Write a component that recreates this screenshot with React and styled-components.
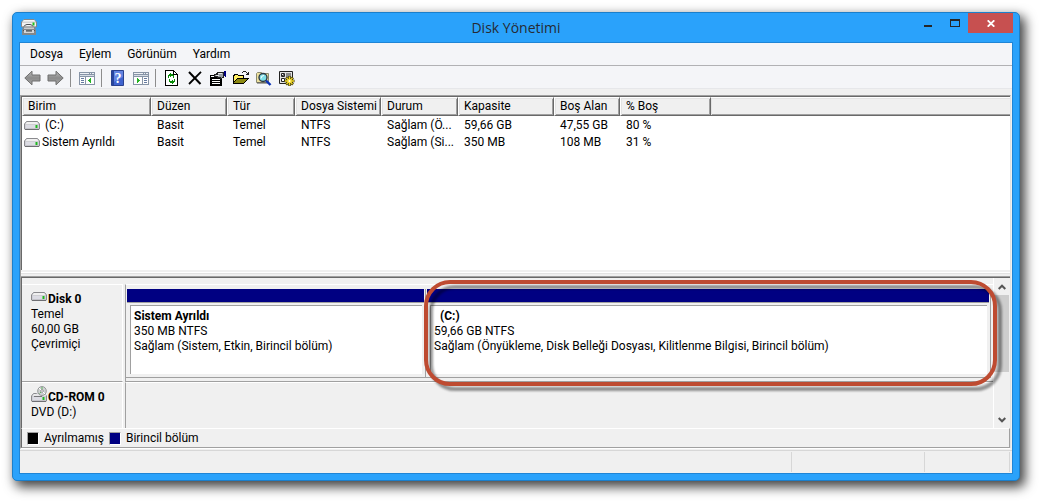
import React from 'react';
import styled, { createGlobalStyle, css } from 'styled-components';

const GlobalStyle = createGlobalStyle`
  * {
    box-sizing: border-box;
  }

  body {
    margin: 0;
    background: #fff;
    color: #000;
    font-family: Roboto, 'Noto Sans', sans-serif;
    font-size: 12px;
    line-height: 15px;
  }

  button {
    font: inherit;
    color: inherit;
    border: none;
    padding: 0;
    background: transparent;
  }

  svg {
    display: block;
    flex: none;
  }
`;

const Page = styled.main`
  display: flex;
  min-height: 100vh;
  padding: 12px 20px 20px 12px;
`;

const Window = styled.section`
  flex: 1;
  min-width: 0;
  display: flex;
  flex-direction: column;
  padding: 0 6px 6px;
  border: 1px solid #1b7fcb;
  border-radius: 5px;
  background: #2aa2fb;
  box-shadow: 4px 5px 12px 1px rgba(0, 0, 0, 0.75);
`;

const TitleBar = styled.header`
  display: grid;
  grid-template-columns: 1fr auto 1fr;
  height: 29px;
`;

const TitleIcon = styled.div`
  padding: 6px 2px;
`;

const Title = styled.h1`
  margin: 0;
  font-family: 'Open Sans', 'Noto Sans', sans-serif;
  font-size: 14px;
  font-weight: 400;
  line-height: 30px;
  color: #262b33;
`;

const Caption = styled.div`
  display: flex;
  justify-content: flex-end;
  height: 20px;
`;

const CaptionButton = styled.button`
  display: flex;
  align-items: center;
  justify-content: center;
  width: ${({ $close }) => ($close ? '45px' : '27px')};
  background: ${({ $close }) => ($close ? '#c75050' : 'transparent')};
`;

const Client = styled.div`
  flex: 1;
  display: flex;
  flex-direction: column;
  border: 1px solid #1f85d6;
  background: #f0f0f0;
`;

const MenuBar = styled.nav`
  display: flex;
  height: 23px;
  padding: 0 2px;
  background: #f4f5f8;
  border-bottom: 1px solid #b1b1b4;
`;

const MenuItem = styled.button`
  padding: 0 8px;
`;

const ToolBar = styled.div`
  display: flex;
  align-items: center;
  height: 23px;
  padding: 2px 0 0 1px;
  background: #f4f5f8;
  border-bottom: 1px solid #e6e7ea;
`;

const ToolButton = styled.button`
  display: flex;
  align-items: center;
  justify-content: center;
  width: 23px;
  height: 20px;
`;

const ToolSeparator = styled.span`
  width: 1px;
  height: 18px;
  margin: 0 4px 0 3px;
  background: #8d8d8d;
`;

const Panes = styled.div`
  flex: 1;
  display: flex;
  flex-direction: column;
  margin: 6px 1px 1px 0;
  border: 1px solid #a0a0a0;
  border-right-color: #e3e3e3;
  border-bottom-color: #fff;
`;

const VolumePane = styled.div`
  flex: 1;
  border-top: 1px solid #696969;
  border-left: 1px solid #696969;
  background: #fff;
`;

const VolumeTable = styled.table`
  width: 100%;
  table-layout: fixed;
  border-collapse: separate;
  border-spacing: 0;

  th {
    height: 19px;
    padding: 0 5px;
    text-align: left;
    font-weight: 400;
    line-height: 15px;
    white-space: nowrap;
    background: #f0f0f0;
    border-top: 1px solid #fff;
    border-left: 1px solid #fff;
    border-right: 1px solid #696969;
    border-bottom: 1px solid #696969;
    box-shadow: inset 1px 1px #e3e3e3, inset -1px -1px #a0a0a0;
  }

  td {
    height: 17px;
    padding: 0 0 0 6px;
    white-space: nowrap;
  }

  tbody::before {
    content: '';
    display: block;
    height: 1px;
  }
`;

const Column = styled.col`
  width: ${({ $width }) => $width};
`;

const FillerHeader = styled.td`
  && {
    height: 19px;
    background: #f0f0f0;
    border-top: 1px solid #fff;
    border-bottom: 1px solid #696969;
    box-shadow: inset 1px 1px #e3e3e3, inset 0 -1px #a0a0a0;
  }
`;

const VolumeName = styled.div`
  display: flex;
  align-items: center;
  gap: 2px;
  margin-left: -4px;
  white-space: pre;
`;

const Splitter = styled.div`
  height: 8px;
  background: #f0f0f0;
  border-top: 2px solid #f0f0f0;
  border-bottom: 1px solid #696969;
  box-shadow: inset 0 1px #fff, inset 0 2px #e3e3e3, inset 0 -1px #a0a0a0;
`;

const DiskPane = styled.div`
  display: flex;
  border-left: 1px solid #696969;
`;

const Disks = styled.div`
  flex: 1;
  min-width: 0;
  padding-top: 6px;
  border-right: 1px solid #fff;
`;

const DiskRow = styled.div`
  display: flex;
  height: ${({ $height }) => $height};
`;

const DiskInfo = styled.div`
  width: 101px;
  padding: 7px 0 0 9px;
  border-top: 1px solid #fff;
  border-right: 1px solid #fff;
  ${({ $last }) =>
    !$last &&
    css`
      border-bottom: 1px solid #a0a0a0;
    `}
`;

const DiskName = styled.div`
  display: flex;
  align-items: ${({ $tall }) => ($tall ? 'flex-end' : 'flex-start')};
  gap: 1px;
  height: 15px;
  font-weight: 700;

  svg {
    margin-bottom: ${({ $tall }) => ($tall ? '3px' : 0)};
  }
`;

const DiskLine = styled.div`
  white-space: pre;
  font-weight: ${({ $bold }) => ($bold ? 700 : 400)};
`;

const DiskBody = styled.div`
  flex: 1;
  min-width: 0;
  display: flex;
  margin-left: 2px;
  padding-top: 4px;
  border-top: 1px solid #fff;
  border-left: 1px solid #a0a0a0;
  ${({ $last }) =>
    !$last &&
    css`
      padding-bottom: 3px;
      border-bottom: 1px solid #a0a0a0;
    `}
`;

const Partition = styled.div`
  position: relative;
  flex: ${({ $width }) => ($width ? `0 0 ${$width}` : '1')};
  min-width: 0;
  display: flex;
  flex-direction: column;
  margin-right: ${({ $width }) => ($width ? '0' : '2px')};
  padding-left: 1px;
  border-right: 1px solid #a0a0a0;
  border-bottom: 1px solid #a0a0a0;
`;

const PartitionBar = styled.div`
  height: 14px;
  margin-right: 1px;
  background: #000082;
  border-bottom: 1px solid #a0a0a0;
`;

const PartitionBox = styled.div`
  flex: 1;
  margin: 2px 3px 3px;
  padding: 3px;
  overflow: hidden;
  white-space: nowrap;
  background: #fff;
  border-top: 1px solid #a0a0a0;
  border-left: 1px solid #a0a0a0;
`;

const Highlight = styled.div`
  position: absolute;
  z-index: 1;
  inset: -9px -7px -9px -2px;
  border: 4px solid #be4b31;
  border-radius: 26px;
  filter: drop-shadow(5px 5px 1px rgba(0, 0, 0, 0.4));
  pointer-events: none;
`;

const ScrollBar = styled.div`
  display: flex;
  flex-direction: column;
  width: 16px;
  padding-right: 1px;
`;

const ScrollButton = styled.button`
  display: flex;
  align-items: center;
  justify-content: center;
  height: 17px;
`;

const ScrollTrack = styled.div`
  flex: 1;
`;

const ScrollThumb = styled.div`
  height: 77px;
  background: #cdcdcd;
`;

const Legend = styled.div`
  display: flex;
  align-items: center;
  gap: 5px;
  height: 20px;
  padding-left: 5px;
  border: 1px solid #a0a0a0;
  border-left-color: #696969;
  border-top-color: #fff;
`;

const Swatch = styled.span`
  width: 12px;
  height: 13px;
  background: ${({ $color }) => $color};
  border: 1px solid #a0a0a0;
  border-right-color: #fff;
  border-bottom-color: #fff;
`;

const StatusBar = styled.footer`
  display: flex;
  height: 23px;
  padding: 1px 2px 1px 0;
  border-top: 1px solid #d7d7d7;
`;

const StatusCell = styled.div`
  flex: ${({ $width }) => ($width ? `0 0 ${$width}` : '1')};
  border-right: 1px solid #d7d7d7;
`;

const DriveShape = () => (
  <>
    <path d="M2.500.500h11l2 2.500v5l-1 .700h-13L.5 8V3z" fill="#c4c4ca" stroke="#8a8a8e" />
    <path d="M3 1h10l1.800 2.200H1.200z" fill="#f0f0f0" />
    <path d="M1.500 4h13v3h-13z" fill="#dcdce4" />
    <path d="M1 8.500h14" stroke="#6e6e72" />
    <path d="M11.500 4h2v3h-2z" fill="#1fb81f" />
  </>
);

const DriveIcon = () => (
  <svg width="16" height="9" viewBox="0 0 16 9">
    <DriveShape />
  </svg>
);

const CdIcon = () => (
  <svg width="16" height="16" viewBox="0 0 16 16">
    <g transform="translate(0 7)">
      <DriveShape />
    </g>
    <path d="M3 9l4-2h7l1 3H2z" fill="#e6e6e8" />
    <ellipse cx="11" cy="5" rx="4.300" ry="4.500" fill="#cfd2d2" stroke="#96999a" />
    <path d="M8 2l2 2M14 8l-2-2" stroke="#fff" />
    <path d="M11 1v2.500M8.500 7.500l1.500-1.500" stroke="#62b562" />
    <circle cx="11" cy="5" r="1.300" fill="#fff" stroke="#777" strokeWidth=".7" />
    <path d="M3 10.500h8" stroke="#77777b" />
  </svg>
);

const AppIcon = () => (
  <svg width="16" height="16" viewBox="0 0 16 16">
    <path d="M3 .5h10l2.500 2.500v5h-15V3z" fill="#d2d4d5" stroke="#85888b" />
    <path d="M3 1h10l1.500 1.500h-13z" fill="#f6f6f6" />
    <path d="M1 4h14v3H1z" fill="#f2f2f3" />
    <path d="M11.500 3.500h2v3h-2z" fill="#1fc01f" />
    <path d="M3 7.500q1-2 3-2h3q2 0 3 2" fill="none" stroke="#4f5255" />
    <path d="M2 8h12l1 3v5H1v-5z" fill="#84888b" />
    <path d="M3 8.500h10v1.500H3z" fill="#c9cbcd" />
    <path d="M2 11.500h12" stroke="#505458" />
    <path d="M3 11h2v2h6v-2h2v3H3z" fill="#d4d6d8" />
    <path d="M5 11h6v1H5z" fill="#63676a" />
  </svg>
);

const ArrowIcon = ({ forward }) => (
  <svg width="17" height="16" viewBox="0 0 17 16">
    <defs>
      <linearGradient id="arrow" x1="0" y1="0" x2="0" y2="1">
        <stop offset="0" stopColor="#b9b9b9" />
        <stop offset=".5" stopColor="#8b8b8b" />
        <stop offset="1" stopColor="#a8a8a8" />
      </linearGradient>
    </defs>
    <path
      d="M.8 8L8 1.200V5h8v6H8v3.800z"
      transform={forward ? 'matrix(-1 0 0 1 17 0)' : undefined}
      fill="url(#arrow)"
      stroke="#6f6f6f"
      strokeLinejoin="round"
    />
  </svg>
);

const ConsoleIcon = ({ action }) => (
  <svg width="16" height="14" viewBox="0 0 16 14" shapeRendering="crispEdges">
    <path d="M0 1h16v13H0z" fill="#8794a6" />
    <path d="M1 2h9v1H1zM11 2h1v1h-1zM13 2h2v1h-2z" fill="#eef1f5" />
    <path d="M1 4h14v1H1z" fill="#d5dce5" />
    <path d="M1 6h14v7H1z" fill="#fdfdfd" />
    {action ? (
      <>
        <path d="M9 6h1v7H9z" fill="#8794a6" />
        <path d="M11 7h3v1h-3zM11 9h3v1h-3zM11 11h3v1h-3z" fill="#657aa0" />
        <path d="M4 7h1v1h1v1h1v1H6v1H5v1H4z" fill="#24b324" />
      </>
    ) : (
      <>
        <path d="M6 6h1v7H6z" fill="#8794a6" />
        <path d="M2 7h3v1H2zM2 9h3v1H2zM2 11h3v1H2z" fill="#657aa0" />
        <path d="M12 7h-1v1h-1v1H9v1h1v1h1v1h1z" fill="#24b324" />
      </>
    )}
  </svg>
);

const HelpIcon = () => (
  <svg width="13" height="16" viewBox="0 0 13 16">
    <path d="M.5.500h12v15H.5z" fill="#3f63cf" stroke="#2a418f" />
    <path d="M1 1h2v14H1z" fill="#27459e" />
    <path d="M3 1h9v6l-9 5z" fill="#6284e2" />
    <text
      x="7"
      y="13"
      textAnchor="middle"
      fontFamily="Liberation Serif, serif"
      fontSize="14"
      fontWeight="700"
      fill="#fff"
    >
      ?
    </text>
  </svg>
);

const RefreshIcon = () => (
  <svg width="13" height="16" viewBox="0 0 13 16" shapeRendering="crispEdges">
    <path d="M0 0h9v1h1v1h1v1h1v1h1v12H0z" fill="#000" />
    <path d="M1 1h7v4h4v10H1z" fill="#fff" />
    <path d="M9 2h1v1h1v1H9z" fill="#fff" />
    <path d="M5 3h1v1h2v1h1v3H8V6H6v1H5V6H4v2H3V5h1V4h1z" fill="#078a07" />
    <path d="M4 9h1v2h2v-1h1v1h1V9h1v3H9v1H8v1H7v-1H5v-1H4z" fill="#078a07" />
  </svg>
);

const DeleteIcon = () => (
  <svg width="14" height="14" viewBox="0 0 14 14">
    <path d="M1 1l11.500 12" stroke="#000" strokeWidth="2" />
    <path d="M13 .8L1 13" stroke="#000" strokeWidth="1.800" />
  </svg>
);

const PropertiesIcon = () => (
  <svg width="16" height="15" viewBox="0 0 16 15" shapeRendering="crispEdges">
    <path d="M0 4h12v11H0z" fill="#000" />
    <path d="M1 5h3v1H1zM2 8h8v1H2zM2 10h8v1H2zM2 12h8v1H2z" fill="#fff" />
    <path d="M4 3h2V2h1V1h7v6h-2v1h-2V7H7V6H4z" fill="#222" />
    <path d="M5 4h3V3h1V2h4v4h-1v1h-1V6H8V5H5z" fill="#989da2" />
    <path d="M8 2h4v1H8zM6 4h3v1H6z" fill="#e5e7e9" />
    <path d="M14 0h2v6h-1V5h-1z" fill="#000080" />
  </svg>
);

const OpenIcon = () => (
  <svg width="16" height="14" viewBox="0 0 16 14" shapeRendering="crispEdges">
    <path d="M0 4h1V3h4v1h6v3h5v1h-1v1h-1v1h-1v1h-1v1h-1v1H0z" fill="#000" />
    <path d="M1 5h1V4h3v1h5v2H4v1H3v1H2v1H1z" fill="#ffee62" />
    <path d="M4 8h10v1h-1v1h-1v1h-1v1H1v-1h1v-1h1V9h1z" fill="#8c8912" />
    <path d="M9 1h1V0h3v1h1v1h1V1h1v3h-3V3h1V2h-1V1h-3v1H9z" fill="#222" />
  </svg>
);

const FindIcon = () => (
  <svg width="16" height="15" viewBox="0 0 16 15">
    <path d="M.5 2.500l1-1h4l1 1h6v9h-12z" fill="#eee2a0" stroke="#8a8a70" />
    <path d="M1 12h11" stroke="#555" />
    <circle cx="7" cy="6.500" r="4" fill="#7edfe8" stroke="#303942" strokeWidth="1.400" />
    <path d="M5 7.500q0-3 3-3" fill="none" stroke="#fff" />
    <path d="M10 9.500l4.500 4.500" stroke="#0a31b5" strokeWidth="2.400" />
  </svg>
);

const SettingsIcon = () => (
  <svg width="16" height="15" viewBox="0 0 16 15">
    <path d="M.5.500h13v12H.5z" fill="#e4e4e4" stroke="#222" />
    <path d="M2.500 2.500h3v3h-3zM2.500 7.500h3v3h-3z" fill="#fff" stroke="#222" />
    <path d="M3 4l1 1 1-2M7 3h5M7 5h5M7 8h2" fill="none" stroke="#333" />
    <path
      d="M10.500 5v10M5.500 10h10M7 6.500l7 7M14 6.500l-7 7"
      stroke="#3f3800"
      strokeWidth="2.600"
    />
    <path
      d="M10.500 5.500v9M6 10h9M7.500 7l6 6M13.500 7l-6 6"
      stroke="#f3da2d"
      strokeWidth="1.300"
    />
    <circle cx="10.500" cy="10" r="2.200" fill="#f6dd32" />
    <circle cx="10.500" cy="10" r="1" fill="#fff" />
  </svg>
);

const MinimizeIcon = () => (
  <svg width="10" height="10" viewBox="0 0 10 10" shapeRendering="crispEdges">
    <path d="M1 7h8v2H1z" fill="#262626" />
  </svg>
);

const MaximizeIcon = () => (
  <svg width="10" height="10" viewBox="0 0 10 10" shapeRendering="crispEdges">
    <path d="M0 1h10v8H0zM1 3v5h8V3z" fill="#262626" fillRule="evenodd" />
  </svg>
);

const CloseIcon = () => (
  <svg width="8" height="7" viewBox="0 0 8 7">
    <path d="M.7.300l6.600 6.400M7.300.300L.7 6.700" stroke="#fff" strokeWidth="1.800" />
  </svg>
);

const ChevronIcon = ({ down }) => (
  <svg width="8" height="6" viewBox="0 0 8 6">
    <path
      d={down ? 'M.7 1L4 4.300 7.300 1' : 'M.7 5L4 1.700 7.300 5'}
      fill="none"
      stroke="#555"
      strokeWidth="2"
    />
  </svg>
);

const menu = ['Dosya', 'Eylem', 'Görünüm', 'Yardım'];

const tools = [
  [
    { label: 'Geri', icon: <ArrowIcon /> },
    { label: 'İleri', icon: <ArrowIcon forward /> },
  ],
  [{ label: 'Konsol Ağacını Göster/Gizle', icon: <ConsoleIcon /> }],
  [
    { label: 'Yardım', icon: <HelpIcon /> },
    { label: 'Eylem Bölmesini Göster/Gizle', icon: <ConsoleIcon action /> },
  ],
  [
    { label: 'Yenile', icon: <RefreshIcon /> },
    { label: 'Sil', icon: <DeleteIcon /> },
    { label: 'Özellikler', icon: <PropertiesIcon /> },
    { label: 'Aç', icon: <OpenIcon /> },
    { label: 'Bul', icon: <FindIcon /> },
    { label: 'Ayarlar', icon: <SettingsIcon /> },
  ],
];

const columns = [
  { title: 'Birim', width: '129px' },
  { title: 'Düzen', width: '76px' },
  { title: 'Tür', width: '68px' },
  { title: 'Dosya Sistemi', width: '86px' },
  { title: 'Durum', width: '77px' },
  { title: 'Kapasite', width: '96px' },
  { title: 'Boş Alan', width: '66px' },
  { title: '% Boş', width: '91px' },
];

const volumes = [
  [' (C:)', 'Basit', 'Temel', 'NTFS', 'Sağlam (Ö...', '59,66 GB', '47,55 GB', '80 %'],
  ['Sistem Ayrıldı', 'Basit', 'Temel', 'NTFS', 'Sağlam (Si...', '350 MB', '108 MB', '31 %'],
];

const App = () => (
  <Page>
    <GlobalStyle />
    <Window>
      <TitleBar>
        <TitleIcon>
          <AppIcon />
        </TitleIcon>
        <Title>Disk Yönetimi</Title>
        <Caption>
          <CaptionButton aria-label="Simge durumuna küçült">
            <MinimizeIcon />
          </CaptionButton>
          <CaptionButton aria-label="Ekranı kapla">
            <MaximizeIcon />
          </CaptionButton>
          <CaptionButton $close aria-label="Kapat">
            <CloseIcon />
          </CaptionButton>
        </Caption>
      </TitleBar>
      <Client>
        <MenuBar>
          {menu.map((item) => (
            <MenuItem key={item}>{item}</MenuItem>
          ))}
        </MenuBar>
        <ToolBar>
          {tools.map((group, index) => (
            <React.Fragment key={group[0].label}>
              {index > 0 && <ToolSeparator />}
              {group.map(({ label, icon }) => (
                <ToolButton key={label} aria-label={label}>
                  {icon}
                </ToolButton>
              ))}
            </React.Fragment>
          ))}
        </ToolBar>
        <Panes>
          <VolumePane>
            <VolumeTable>
              <colgroup>
                {columns.map(({ title, width }) => (
                  <Column key={title} $width={width} />
                ))}
                <Column $width="auto" />
              </colgroup>
              <thead>
                <tr>
                  {columns.map(({ title }) => (
                    <th key={title}>{title}</th>
                  ))}
                  <FillerHeader />
                </tr>
              </thead>
              <tbody>
                {volumes.map(([name, ...cells]) => (
                  <tr key={name}>
                    <td>
                      <VolumeName>
                        <DriveIcon />
                        {name}
                      </VolumeName>
                    </td>
                    {cells.map((cell) => (
                      <td key={cell}>{cell}</td>
                    ))}
                  </tr>
                ))}
              </tbody>
            </VolumeTable>
          </VolumePane>
          <Splitter />
          <DiskPane>
            <Disks>
              <DiskRow $height="98px">
                <DiskInfo>
                  <DiskName>
                    <DriveIcon />
                    Disk 0
                  </DiskName>
                  <DiskLine>Temel</DiskLine>
                  <DiskLine>60,00 GB</DiskLine>
                  <DiskLine>Çevrimiçi</DiskLine>
                </DiskInfo>
                <DiskBody>
                  <Partition $width="300px">
                    <PartitionBar />
                    <PartitionBox>
                      <DiskLine $bold>Sistem Ayrıldı</DiskLine>
                      <DiskLine>350 MB NTFS</DiskLine>
                      <DiskLine>Sağlam (Sistem, Etkin, Birincil bölüm)</DiskLine>
                    </PartitionBox>
                  </Partition>
                  <Partition>
                    <PartitionBar />
                    <PartitionBox>
                      <DiskLine $bold>{'  (C:)'}</DiskLine>
                      <DiskLine>59,66 GB NTFS</DiskLine>
                      <DiskLine>
                        Sağlam (Önyükleme, Disk Belleği Dosyası, Kilitlenme Bilgisi, Birincil bölüm)
                      </DiskLine>
                    </PartitionBox>
                    <Highlight />
                  </Partition>
                </DiskBody>
              </DiskRow>
              <DiskRow $height="46px">
                <DiskInfo $last>
                  <DiskName $tall>
                    <CdIcon />
                    CD-ROM 0
                  </DiskName>
                  <DiskLine>DVD (D:)</DiskLine>
                </DiskInfo>
                <DiskBody $last />
              </DiskRow>
            </Disks>
            <ScrollBar>
              <ScrollButton aria-label="Yukarı kaydır">
                <ChevronIcon />
              </ScrollButton>
              <ScrollTrack>
                <ScrollThumb />
              </ScrollTrack>
              <ScrollButton aria-label="Aşağı kaydır">
                <ChevronIcon down />
              </ScrollButton>
            </ScrollBar>
          </DiskPane>
          <Legend>
            <Swatch $color="#000" />
            Ayrılmamış
            <Swatch $color="#000082" />
            Birincil bölüm
          </Legend>
        </Panes>
        <StatusBar>
          <StatusCell />
          <StatusCell $width="133px" />
          <StatusCell $width="85px" />
        </StatusBar>
      </Client>
    </Window>
  </Page>
);

export default App;
